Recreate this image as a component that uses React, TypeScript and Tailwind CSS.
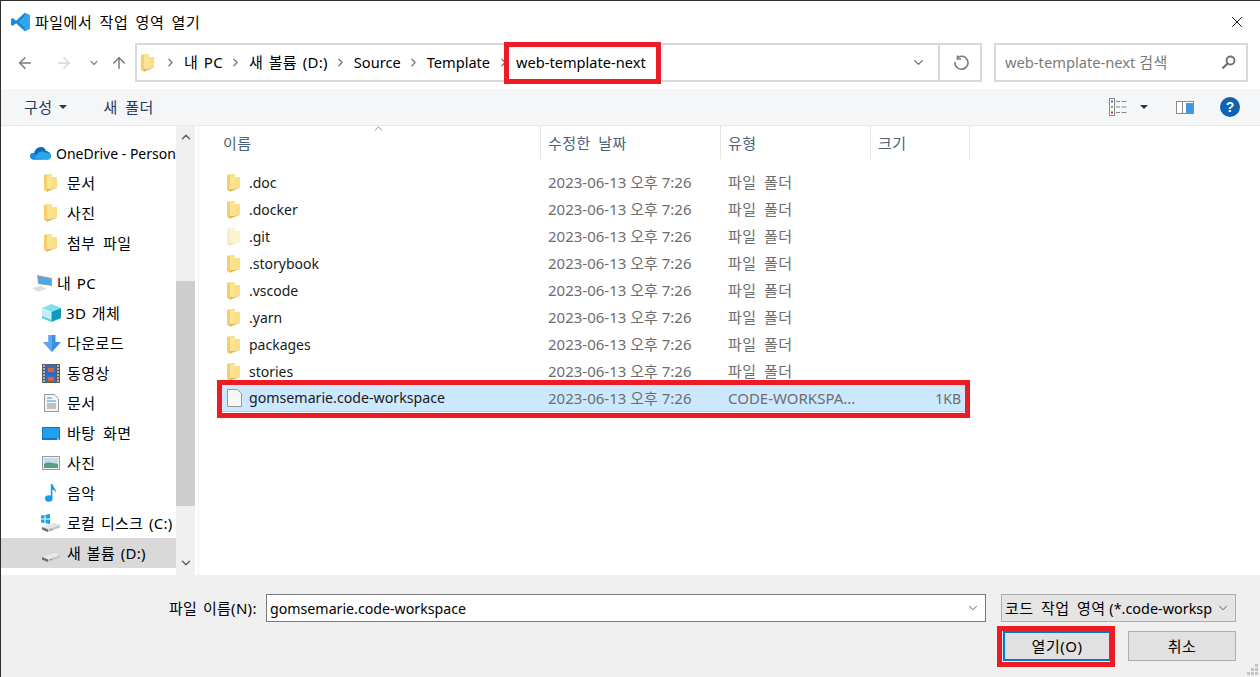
import { ChevronDown, ChevronUp, ChevronRight, ArrowLeft, ArrowRight, ArrowUp, X } from "lucide-react";

const font = "font-['Noto_Sans','Noto_Sans_CJK_KR',sans-serif]";
// Korean glyphs in the shot run wider than Noto at the same size
const ko = "text-[15px] tracking-[0.5px] [word-spacing:3px]";
// same for labels that mix Korean and latin
const mix = "text-[15px] tracking-[0.3px] [word-spacing:1.5px]";

const files = [
  { name: ".doc" },
  { name: ".docker" },
  { name: ".git", faded: true },
  { name: ".storybook" },
  { name: ".vscode" },
  { name: ".yarn" },
  { name: "packages" },
  { name: "stories" },
];

function Folder({ faded = false }: { faded?: boolean }) {
  return (
    <svg width="13" height="18" viewBox="0 0 13 18" className={`shrink-0 ${faded ? "opacity-40" : ""}`}>
      <path d="M0 1 L8 0 L8 3 L13 3 L13 14 L4 14 L4 18 L0 16 Z" fill="#e9bd52" />
      <path d="M3 0.6 L8 0 L8 14 L3 15 Z" fill="#fbe394" />
      <path d="M8 3 L13 3 L13 14 L8 14 Z" fill="#fcdf85" />
      <path d="M0 1 L3 0.6 L3 17 L0 16 Z" fill="#f4cf6c" />
      <path d="M3 15 L13 14 L3 17.5 Z" fill="#e5b744" />
    </svg>
  );
}

function VsCodeLogo() {
  return (
    <svg width="21" height="20" viewBox="0 0 100 100" className="shrink-0">
      <path d="M71 4 L96 16 V84 L71 96 L28 56 L11 70 L3 65 V35 L11 30 L28 44 Z M71 28 L44 50 L71 72 Z" fill="#1a8ad4" fillRule="evenodd" />
      <path d="M71 4 L96 16 V84 L71 96 Z M71 28 V72 L44 50 Z" fill="#2ea6ea" fillRule="evenodd" />
    </svg>
  );
}

function NavIcon({ kind }: { kind: string }) {
  if (kind === "onedrive")
    return (
      <svg width="21" height="14" viewBox="0 0 21 14">
        <path d="M4 13.5 C1 13.5 0 11.5 0 10 C0 8 2 6.5 4 7 C5 3 8 1 11 1 C14 1 15.5 3 16 5 C18.5 5 21 7.5 21 10 C21 12 19.5 13.5 18 13.5 Z" fill="#0f6cbd" />
        <path d="M4 13.5 C1 13.5 0 11.5 0 10 C0 8 2 6.5 4 7 L12 13.5 Z" fill="#1490df" />
        <path d="M8 7 C10 5 14 5 16 7 C18.5 6 21 8 21 10 C21 12 19.5 13.5 18 13.5 H8 L5 11 Z" fill="#28a8ea" />
      </svg>
    );
  if (kind === "pc")
    return (
      <svg width="21" height="18" viewBox="0 0 21 18">
        <path d="M5 1 L20 4 V12 L6 10 Z" fill="#9ca3a8" />
        <path d="M6 2.5 L19 5 V11 L7 9.5 Z" fill="#4aa8e8" />
        <path d="M0 14 L9 12 L15 15 L6 17.5 Z" fill="#d9dcde" />
      </svg>
    );
  if (kind === "3d")
    return (
      <svg width="19" height="18" viewBox="0 0 19 18">
        <path d="M9.5 0 L19 4 L9.5 8 L0 4 Z" fill="#7fe0ee" />
        <path d="M0 4 L9.5 8 V18 L0 14 Z" fill="#c3eff5" />
        <path d="M19 4 L9.5 8 V18 L19 14 Z" fill="#0d9cc0" />
        <path d="M0 12 L9.5 16 V18 L0 14 Z" fill="#57c7dc" />
      </svg>
    );
  if (kind === "download")
    return (
      <svg width="18" height="17" viewBox="0 0 18 17">
        <path d="M5.5 0 H12.5 V7 H18 L9 17 L0 7 H5.5 Z" fill="#3c8fe0" />
        <path d="M5.5 0 H9 V17 L0 7 H5.5 Z" fill="#5cabf0" />
      </svg>
    );
  if (kind === "video")
    return (
      <svg width="18" height="19" viewBox="0 0 18 19">
        <rect width="18" height="19" fill="#5d5d5d" />
        <rect x="4" y="1" width="10" height="8" fill="#2f6fc4" />
        <rect x="4" y="10" width="10" height="8" fill="#2f6fc4" />
        <rect x="6" y="4" width="6" height="4" fill="#d9643a" />
        <rect x="6" y="13" width="6" height="4" fill="#d9643a" />
        <path d="M1 2h2M1 5h2M1 8h2M1 11h2M1 14h2M1 17h2M15 2h2M15 5h2M15 8h2M15 11h2M15 14h2M15 17h2" stroke="#fff" strokeWidth="1.2" />
      </svg>
    );
  if (kind === "doc")
    return (
      <svg width="15" height="18" viewBox="0 0 15 18">
        <path d="M0.5 0.5 H10.5 L14.5 4.5 V17.5 H0.5 Z" fill="#f5f5f5" stroke="#9a9a9a" />
        <path d="M3 4h5M3 7h9" stroke="#3d94d6" />
        <path d="M3 10h9M3 12h9M3 14h9" stroke="#8c8c8c" />
      </svg>
    );
  if (kind === "desktop")
    return (
      <svg width="18" height="13" viewBox="0 0 18 13">
        <rect width="18" height="13" fill="#0f78c9" />
        <rect x="1" y="1" width="16" height="10" fill="#21a0ec" />
        <rect x="15" y="11.5" width="2" height="1" fill="#ffffff" />
      </svg>
    );
  if (kind === "picture")
    return (
      <svg width="18" height="14" viewBox="0 0 18 14">
        <rect x="0.5" y="0.5" width="17" height="13" fill="#eef2f3" stroke="#9a9a9a" />
        <rect x="2" y="2" width="14" height="10" fill="#c6dbe8" />
        <path d="M2 8 C6 5 10 7 16 8 V12 H2 Z" fill="#5e9a8c" />
      </svg>
    );
  if (kind === "music")
    return (
      <svg width="12" height="18" viewBox="0 0 12 18">
        <ellipse cx="3.8" cy="14.5" rx="3.8" ry="3.2" fill="#1c9be8" />
        <path d="M5.8 0 H7.4 C7.8 3 11.5 5 11 9 C10.5 7 9 6 7.4 5.8 V14.5 H5.8 Z" fill="#1c9be8" />
      </svg>
    );
  const win = kind === "disk-c";
  return (
    <svg width="20" height="19" viewBox="0 0 20 19">
      <path d="M1 13 L13 9 L19 11 L19 13.5 L7 18 L1 15.5 Z" fill="#c4c6c8" />
      <path d="M1 13 L13 9 L19 11 L7 15.5 Z" fill="#e7e8e9" />
      <path d="M1 13 L7 15.5 V18 L1 15.5 Z" fill="#6c6e70" />
      <path d="M9 16 L11 15.2" stroke="#3fbf4a" strokeWidth="1.2" />
      {win && <path d="M0 1.5 L3.5 1 V4.5 H0 Z M4.5 0.8 L9 0 V4.5 H4.5 Z M0 5.5 H3.5 V9 L0 8.5 Z M4.5 5.5 H9 V10 L4.5 9.2 Z" fill="#12a5ea" />}
    </svg>
  );
}

type NavRow = { label: string; kind: string; indent: string; text: string; gap?: boolean; selected?: boolean };

const navRows: NavRow[] = [
  { label: "OneDrive - Personal", kind: "onedrive", indent: "pl-[29px] gap-[5px]", text: "" },
  { label: "문서", kind: "folder", indent: "pl-[43px] gap-[10px]", text: ko },
  { label: "사진", kind: "folder", indent: "pl-[43px] gap-[10px]", text: ko },
  { label: "첨부 파일", kind: "folder", indent: "pl-[43px] gap-[10px]", text: ko },
  { label: "내 PC", kind: "pc", indent: "pl-[31px] gap-[4px]", text: mix, gap: true },
  { label: "3D 개체", kind: "3d", indent: "pl-[41px] gap-[5px]", text: mix },
  { label: "다운로드", kind: "download", indent: "pl-[42px] gap-[6px]", text: ko },
  { label: "동영상", kind: "video", indent: "pl-[41px] gap-[7px]", text: ko },
  { label: "문서", kind: "doc", indent: "pl-[43px] gap-[8px]", text: ko },
  { label: "바탕 화면", kind: "desktop", indent: "pl-[41px] gap-[7px]", text: ko },
  { label: "사진", kind: "picture", indent: "pl-[41px] gap-[7px]", text: ko },
  { label: "음악", kind: "music", indent: "pl-[44px] gap-[10px]", text: ko },
  { label: "로컬 디스크 (C:)", kind: "disk-c", indent: "pl-[40px] gap-[6px]", text: mix },
  { label: "새 볼륨 (D:)", kind: "disk-d", indent: "pl-[40px] gap-[6px]", text: mix, selected: true },
];

function Crumb({ label, korean = false }: { label: string; korean?: boolean }) {
  return (
    <>
      <span className={`whitespace-nowrap ${korean ? mix : "text-[14.6px]"}`}>{label}</span>
      <ChevronRight size={13} strokeWidth={2.5} className="shrink-0 mx-[6.5px] text-[#7c7c7c]" />
    </>
  );
}

export default function App() {
  return (
    <div className={`${font} relative w-[1260px] h-[677px] overflow-hidden flex flex-col bg-white border-t border-l border-[#2d2d2d] text-[14px] text-black`}>
      {/* Title bar */}
      <div className="h-[42px] shrink-0 flex items-center pl-[9px] pr-[14px]">
        <VsCodeLogo />
        <span className={`ml-[4px] flex-1 ${ko}`}>파일에서 작업 영역 열기</span>
        <X size={18} strokeWidth={1.2} />
      </div>

      {/* Address row */}
      <div className="h-[46px] shrink-0 flex items-start">
        <div className="w-[134px] h-[39px] flex items-center shrink-0">
          <ArrowLeft size={18} strokeWidth={2} className="ml-[15px] text-[#7a7a7a]" />
          <ArrowRight size={18} strokeWidth={2} className="ml-[21px] text-[#d9d9d9]" />
          <ChevronDown size={12} strokeWidth={2.5} className="ml-[15px] text-[#8a8a8a]" />
          <ArrowUp size={18} strokeWidth={2} className="ml-[10px] text-[#7a7a7a]" />
        </div>
        <div className="w-[847px] h-[39px] flex items-center border-2 border-[#d9d9d9] shrink-0">
          <div className="pl-[4px] flex items-center flex-1 overflow-hidden">
            <Folder />
            <ChevronRight size={13} strokeWidth={2.5} className="shrink-0 ml-[10px] mr-[7px] text-[#7c7c7c]" />
            <Crumb label="내 PC" korean />
            <Crumb label="새 볼륨 (D:)" korean />
            <Crumb label="Source" />
            <Crumb label="Template" />
            <Crumb label="web-template-next" />
          </div>
          <ChevronDown size={15} strokeWidth={2} className="mr-[12px] text-[#6d6d6d]" />
          <div className="w-[42px] h-full border-l-2 border-[#d9d9d9] flex items-center justify-center pl-[1px]">
            <svg width="16" height="16" viewBox="0 0 16 16" fill="none" stroke="#7a7a7a" strokeWidth="1.6">
              <path d="M4 3 A6.5 6.5 0 1 1 2 7" />
              <path d="M4.5 0.5 V4 H8" />
            </svg>
          </div>
        </div>
        <div className="ml-[12px] w-[254px] h-[39px] border-2 border-[#d9d9d9] flex items-center pl-[9px] pr-[10px] text-[#7a7a7a] shrink-0">
          <span className="flex-1 text-[14.7px]">web-template-next <span className={ko}>검색</span></span>
          <svg width="15" height="15" viewBox="0 0 15 15">
            <circle cx="9.5" cy="5.5" r="4" fill="none" stroke="#6d6d6d" strokeWidth="1.8" />
            <path d="M6.5 8.5 L1.5 13.5" stroke="#6d6d6d" strokeWidth="2.2" />
          </svg>
        </div>
      </div>

      {/* Command bar */}
      <div className="h-[37px] shrink-0 bg-[#f5f6f7] flex items-center text-[#1e395b] border-b border-[#e7e9ec]">
        <span className={`ml-[23px] pt-[1px] ${ko}`}>구성</span>
        <span className="ml-[6px] w-0 h-0 border-x-[4px] border-x-transparent border-t-[4px] border-t-[#1e395b]" />
        <span className={`ml-[37px] pt-[1px] flex-1 ${ko}`}>새 폴더</span>
        <svg width="18" height="18" viewBox="0 0 18 18" className="shrink-0">
          <rect x="0.5" y="0.5" width="5" height="17" fill="#fff" stroke="#8a8a8a" />
          <rect x="2" y="2.5" width="2" height="2" fill="#3a76c4" />
          <rect x="2" y="8" width="2" height="2" fill="#a8a02c" />
          <rect x="2" y="13.5" width="2" height="2" fill="#c4432c" />
          <path d="M7 3.5h4M12.5 3.5h5M7 9h4M12.5 9h5M7 14.5h4M12.5 14.5h5" stroke="#8a8a8a" />
        </svg>
        <span className="ml-[13px] w-0 h-0 border-x-[4px] border-x-transparent border-t-[4px] border-t-[#1e395b]" />
        <svg width="18" height="13" viewBox="0 0 18 13" className="ml-[28px] shrink-0">
          <rect x="0.5" y="0.5" width="17" height="12" fill="#fff" stroke="#8a8a8a" />
          <rect x="10" y="2" width="7" height="10" fill="#4096e0" />
          <path d="M6.5 1v11" stroke="#8a8a8a" />
        </svg>
        <span className="ml-[26px] mr-[20px] w-[20px] h-[20px] rounded-full bg-[#0f63b5] text-white font-bold text-[14px] flex items-center justify-center font-['Liberation_Sans',sans-serif]">?</span>
      </div>

      {/* Body */}
      <div className="flex-1 min-h-0 flex">
        <div className="w-[175px] shrink-0 overflow-hidden pt-[12px]">
          {navRows.map((row) => (
            <div
              key={row.kind + row.label}
              className={`h-[30px] flex items-center whitespace-nowrap ${row.indent} ${row.gap ? "mt-[10px]" : ""} ${row.selected ? "bg-[#d9d9d9]" : ""}`}
            >
              <span className="shrink-0 flex items-center">
                {row.kind === "folder" ? <Folder /> : <NavIcon kind={row.kind} />}
              </span>
              <span className={row.text}>{row.label}</span>
            </div>
          ))}
        </div>

        <div className="w-[19px] shrink-0 bg-[#f0f0f0] flex flex-col items-center pb-[3px]">
          <ChevronUp size={14} strokeWidth={2.5} className="text-[#606060] my-[4px]" />
          <div className="mt-[133px] w-full h-[225px] bg-[#cdcdcd]" />
          <div className="flex-1" />
          <ChevronDown size={14} strokeWidth={2.5} className="text-[#606060] mb-[2px]" />
        </div>

        <div className="flex-1 min-w-0 ml-[3px] border-l border-[#f0f0f0] pr-[290px]">
          <div className="relative h-[33px] grid grid-cols-[341px_180px_150px_100px] text-[#4c607a]">
            <ChevronUp size={13} strokeWidth={1.3} className="absolute left-[173px] top-[-4px] text-[#5f5f5f]" />
            <div className={`flex items-center pl-[24px] pt-[2px] ${ko}`}>이름</div>
            <div className={`flex items-center pl-[7px] pt-[2px] border-l border-[#e5e5e5] ${ko}`}>수정한 날짜</div>
            <div className={`flex items-center pl-[7px] pt-[2px] border-l border-[#e5e5e5] ${ko}`}>유형</div>
            <div className={`flex items-center pl-[7px] pt-[2px] border-x border-[#e5e5e5] ${ko}`}>크기</div>
          </div>
          <div className="mt-[10px] text-[#6d6d6d]">
            {files.map((file) => (
              <div key={file.name} className="h-[27px] grid grid-cols-[341px_180px_150px_100px] items-center">
                <div className="flex items-center pl-[28px] gap-[9px] text-black">
                  <Folder faded={file.faded} />
                  <span className="text-[#1a1a1a]">{file.name}</span>
                </div>
                <div className="pl-[8px] text-[15px] whitespace-nowrap">2023-06-13 오후 7:26</div>
                <div className={`pl-[8px] ${ko}`}>파일 폴더</div>
                <div />
              </div>
            ))}
            <div className="ml-[20px] h-[27px] grid grid-cols-[321px_180px_150px_100px] items-center bg-[#cce8ff] border-b border-[#99d1ff]">
              <div className="flex items-center pl-[8px] gap-[7px]">
                <svg width="15" height="18" viewBox="0 0 15 18" className="shrink-0">
                  <path d="M0.5 0.5 H10.5 L14.5 4.5 V17.5 H0.5 Z" fill="#f7f7f7" stroke="#9a9a9a" />
                </svg>
                <span className="text-[#1a1a1a] text-[14.2px]">gomsemarie.code-workspace</span>
              </div>
              <div className="pl-[8px] text-[15px] whitespace-nowrap">2023-06-13 오후 7:26</div>
              <div className="pl-[8px] text-[15px]">CODE-WORKSPA...</div>
              <div className="text-right pr-[9px]">1KB</div>
            </div>
          </div>
        </div>
      </div>

      {/* Footer */}
      <div className="relative h-[102px] shrink-0 bg-[#f0f0f0] pt-[19px] pl-[168px]">
        <div className="flex items-center">
          <span className={`w-[97px] whitespace-nowrap ${mix}`}>파일 이름(N):</span>
          <div className="w-[720px] h-[28px] bg-white border border-[#7a7a7a] flex items-center pl-[3px] pr-[5px]">
            <span className="flex-1 pt-[1px] text-[14.2px]">gomsemarie.code-workspace</span>
            <ChevronDown size={14} strokeWidth={1.5} className="text-[#4a4a4a]" />
          </div>
          <div className="ml-[15px] w-[235px] h-[28px] bg-[#e5e5e5] border border-[#adadad] flex items-center pl-[3px] pr-[5px] overflow-hidden">
            <span className="flex-1 whitespace-nowrap overflow-hidden text-[14.4px]"><span className={ko}>코드 작업 영역</span> (*.code-worksp</span>
            <ChevronDown size={14} strokeWidth={1.5} className="text-[#4a4a4a] ml-[3px] shrink-0" />
          </div>
        </div>
        <div className="mt-[9px] flex justify-end pr-[24px] gap-[17px]">
          <button className={`w-[108px] h-[30px] bg-[#e1e1e1] border-2 border-[#0078d7] ${ko}`}>열기(O)</button>
          <button className={`w-[108px] h-[30px] bg-[#e1e1e1] border border-[#adadad] ${ko}`}>취소</button>
        </div>
        <svg width="12" height="12" viewBox="0 0 12 12" className="absolute right-[1px] bottom-[1px]">
          <path d="M8 0h3v3H8zM4 4h3v3H4zM8 4h3v3H8zM0 8h3v3H0zM4 8h3v3H4zM8 8h3v3H8z" fill="#c4c4c4" />
        </svg>
      </div>

      {/* Red annotation boxes */}
      <div className="absolute left-[503px] top-[41px] w-[157px] h-[42px] border-[5px] border-[#ed1c24]" />
      <div className="absolute left-[216px] top-[379px] w-[753px] h-[38px] border-[5px] border-[#ed1c24]" />
      <div className="absolute left-[996px] top-[625px] w-[118px] h-[41px] border-[5px] border-[#ed1c24]" />
    </div>
  );
}
